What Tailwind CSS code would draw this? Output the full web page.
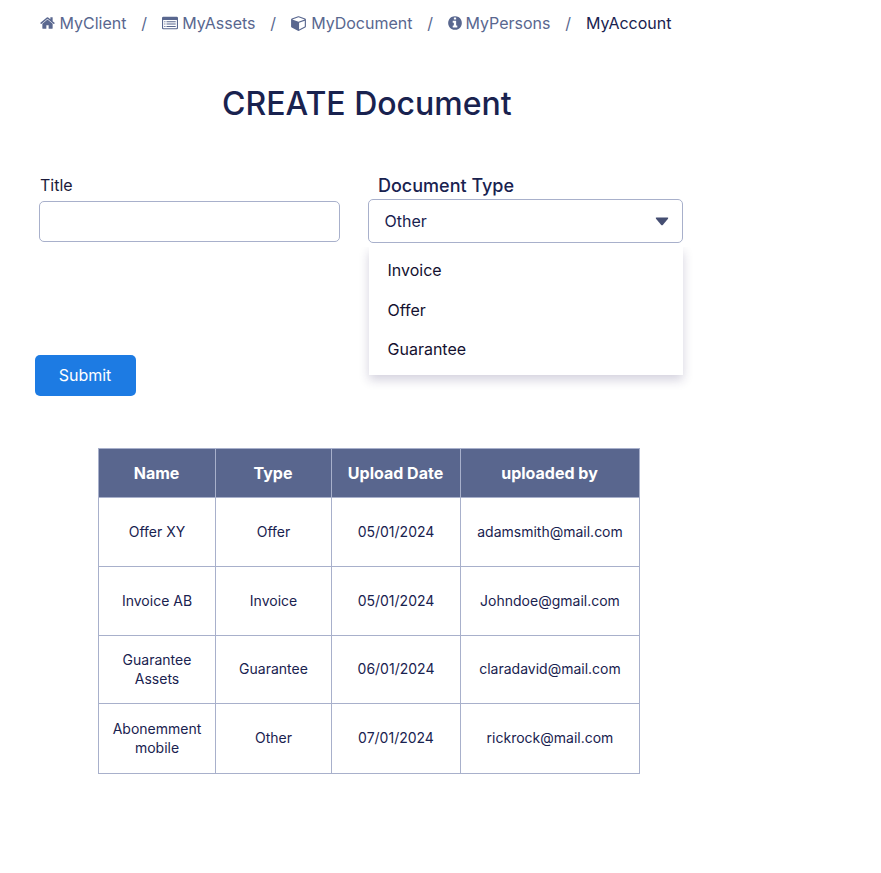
<!DOCTYPE html>
<html lang="en">
<head>
<meta charset="utf-8">
<title>Create Document</title>
<script src="https://cdn.jsdelivr.net/npm/@tailwindcss/browser@4"></script>
</head>
<body class="bg-white font-[Inter,sans-serif] text-[#19224f]">
<nav class="flex h-[46px] items-center pl-10 text-base text-[#59678f]">
  <a class="flex w-[86.5px] items-center justify-between"><svg class="h-4 w-[15px]" viewBox="0 0 1664 1792" fill="currentColor"><path d="M1408 992v480q0 26-19 45t-45 19h-384v-384h-256v384h-384q-26 0-45-19t-19-45v-480q0-1 .5-3t.5-3l575-474 575 474q1 2 1 6zm223-69l-62 74q-8 9-21 11h-3q-13 0-21-7l-692-577-692 577q-12 8-24 7-13-2-21-11l-62-74q-8-10-7-23.5t11-21.5l719-599q32-26 76-26t76 26l244 204v-195q0-14 9-23t23-9h192q14 0 23 9t9 23v408l219 182q10 8 11 21.5t-7 23.5z"/></svg><span>MyClient</span></a>
  <span class="w-[35.5px] text-center">/</span>
  <a class="flex w-[93.5px] items-center justify-between"><svg class="h-4 w-4" viewBox="0 0 16 16" fill="currentColor"><path fill-rule="evenodd" d="M1.4 1.7h13.2A1.4 1.4 0 0 1 16 3.1v9.8a1.4 1.4 0 0 1-1.4 1.4H1.4A1.4 1.4 0 0 1 0 12.9V3.1a1.4 1.4 0 0 1 1.4-1.4zM1.1 5.1v7.7q0 .4.4.4h13q.4 0 .4-.4V5.1z"/><path d="M2.3 6.3h1.1v1H2.3zM4.5 6.3h9.2v1H4.5zM2.3 8.6h1.1v1H2.3zM4.5 8.6h9.2v1H4.5zM2.3 10.9h1.1v1H2.3zM4.5 10.9h9.2v1H4.5z"/></svg><span>MyAssets</span></a>
  <span class="w-[35.5px] text-center">/</span>
  <a class="flex w-[121.5px] items-center justify-between"><svg class="h-4 w-[15px]" viewBox="0 0 1664 1792" fill="currentColor"><path d="M896 1629l640-349v-636l-640 233v752zm-64-865l698-254-698-254-698 254zm832-252v768q0 35-18 65t-49 47l-704 384q-28 16-61 16t-61-16l-704-384q-31-17-49-47t-18-65v-768q0-40 23-73t61-47l704-256q22-8 44-8t44 8l704 256q38 14 61 47t23 73z"/></svg><span>MyDocument</span></a>
  <span class="w-[35.5px] text-center">/</span>
  <a class="flex w-[102.5px] items-center justify-between"><svg class="h-4 w-[14px]" viewBox="0 0 1536 1792" fill="currentColor"><path d="M1024 1376v-160q0-14-9-23t-23-9h-96v-512q0-14-9-23t-23-9h-320q-14 0-23 9t-9 23v160q0 14 9 23t23 9h96v320h-96q-14 0-23 9t-9 23v160q0 14 9 23t23 9h448q14 0 23-9t9-23zm-128-896v-160q0-14-9-23t-23-9h-192q-14 0-23 9t-9 23v160q0 14 9 23t23 9h192q14 0 23-9t9-23zm640 416q0 209-103 385.5t-279.5 279.5-385.5 103-385.5-103-279.5-279.5-103-385.5 103-385.5 279.5-279.5 385.5-103 385.5 103 279.5 279.5 103 385.5z"/></svg><span>MyPersons</span></a>
  <span class="w-[35.5px] text-center">/</span>
  <a class="text-[#19224f]">MyAccount</a>
</nav>
<main>
  <h1 class="mt-[37px] ml-[222px] text-[32px] leading-[41px] font-medium whitespace-nowrap">CREATE Document</h1>
  <form class="relative mt-[51px] h-[221px]">
    <div class="flex items-start">
      <div class="ml-[39px] w-[301px]">
        <label class="block h-[26px] pl-px text-base leading-[21px] text-[#1b1a3a]">Title</label>
        <input class="block h-[41px] w-full rounded-[5px] border border-[#a8b0cb]">
      </div>
      <div class="relative ml-7 w-[315px]">
        <label class="block h-6 pl-[10px] text-lg leading-[22px] font-medium">Document Type</label>
        <div class="flex h-11 items-center justify-between rounded-[5px] border border-[#a8b0cb] pr-[13px] pl-[15.5px] text-base"><span>Other</span><svg class="h-[9px] w-[14px]" viewBox="0 0 14 9" fill="#454e72"><path d="M1.5.5h11q1.2.1.5 1.2L8 7.8q-1 1-2 0L1 1.7Q.3.6 1.5.5z"/></svg></div>
        <ul class="absolute top-[72px] left-px w-[314px] bg-white pt-[3px] pb-[6px] text-base text-[#141130] shadow-[0_5px_10px_rgba(40,30,90,0.2)] [clip-path:inset(0_-20px_-25px_-20px)]">
          <li class="h-[39.5px] pl-[18.5px] leading-[40px]">Invoice</li>
          <li class="h-[39.5px] pl-[18.5px] leading-[40px]">Offer</li>
          <li class="h-[39.5px] pl-[18.5px] leading-[40px]">Guarantee</li>
        </ul>
      </div>
    </div>
    <button type="button" class="mt-28 ml-[35px] h-[41px] w-[101px] rounded-[5px] bg-[#1d7be3] pr-px pb-[2px] text-base text-white">Submit</button>
  </form>
  <table class="mt-[52px] ml-[98px] w-[542px] table-fixed border-collapse text-center text-sm leading-[19px] [&_td]:border [&_td]:border-[#a8b0cb] [&_td]:p-0 [&_td]:pb-[2px] [&_th]:border [&_th]:border-[#a8b0cb] [&_th]:p-0 [&_th]:pr-px">
    <colgroup><col class="w-[117px]"><col class="w-[116px]"><col class="w-[129px]"><col class="w-[179px]"></colgroup>
    <thead><tr class="h-[49px] bg-[#59668e] text-base text-white"><th>Name</th><th>Type</th><th>Upload Date</th><th>uploaded by</th></tr></thead>
    <tbody>
      <tr class="h-[69px]"><td>Offer XY</td><td>Offer</td><td>05/01/2024</td><td>adamsmith@mail.com</td></tr>
      <tr class="h-[69px]"><td>Invoice AB</td><td>Invoice</td><td>05/01/2024</td><td>Johndoe@gmail.com</td></tr>
      <tr class="h-[68px]"><td>Guarantee<br>Assets</td><td>Guarantee</td><td>06/01/2024</td><td>claradavid@mail.com</td></tr>
      <tr class="h-[70px]"><td>Abonemment<br>mobile</td><td>Other</td><td>07/01/2024</td><td>rickrock@mail.com</td></tr>
    </tbody>
  </table>
</main>
</body>
</html>
